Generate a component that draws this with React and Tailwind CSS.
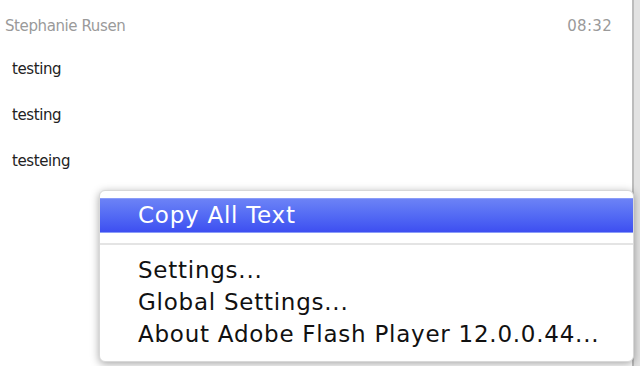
export default function App() {
  return (
    <div className="relative w-[640px] h-[366px] overflow-hidden bg-white flex">
      <div className="flex-1 flex flex-col" style={{ fontFamily: '"DejaVu Sans", sans-serif' }}>
        <div className="flex justify-between items-center h-[26px] mt-[13px] pl-[5px] pr-[20px] text-[15px] text-[#9a9a9a]">
          <span className="tracking-[-0.4px]">Stephanie Rusen</span>
          <span className="tracking-[0.3px]">08:32</span>
        </div>
        <div className="flex flex-col pl-[12px] text-[15px] text-[#222] gap-[26px] mt-[20px]">
          <span className="leading-[20px] tracking-[-0.4px]">testing</span>
          <span className="leading-[20px] tracking-[-0.4px]">testing</span>
          <span className="leading-[20px] tracking-[-0.4px]">testeing</span>
        </div>
      </div>
      <div className="w-[2px] bg-[#bcbcbc]" />
      <div className="w-[6px] bg-[#e2e2e2]" />

      <div
        className="absolute left-[99px] top-[190px] w-[535px] h-[172px] bg-white rounded-[6px] border border-[#d8d8d8] shadow-[0_2px_8px_rgba(0,0,0,0.35)] flex flex-col pt-[7px] tracking-[0.75px]"
        style={{ fontFamily: '"DejaVu Sans", sans-serif' }}
      >
        <div className="h-[35px] bg-gradient-to-b from-[#6c82f6] to-[#3e4ef1] border-t border-b border-[#8a9cf8] flex items-center pl-[38px] text-[23px] text-white">
          Copy All Text
        </div>
        <div className="h-[21px] flex items-center">
          <div className="w-full h-[2px] bg-[#e4e4e4]" />
        </div>
        <div className="flex flex-col pl-[38px] text-[23px] text-[#111] leading-[32px]">
          <span>Settings...</span>
          <span>Global Settings...</span>
          <span>About Adobe Flash Player 12.0.0.44...</span>
        </div>
      </div>
    </div>
  );
}
